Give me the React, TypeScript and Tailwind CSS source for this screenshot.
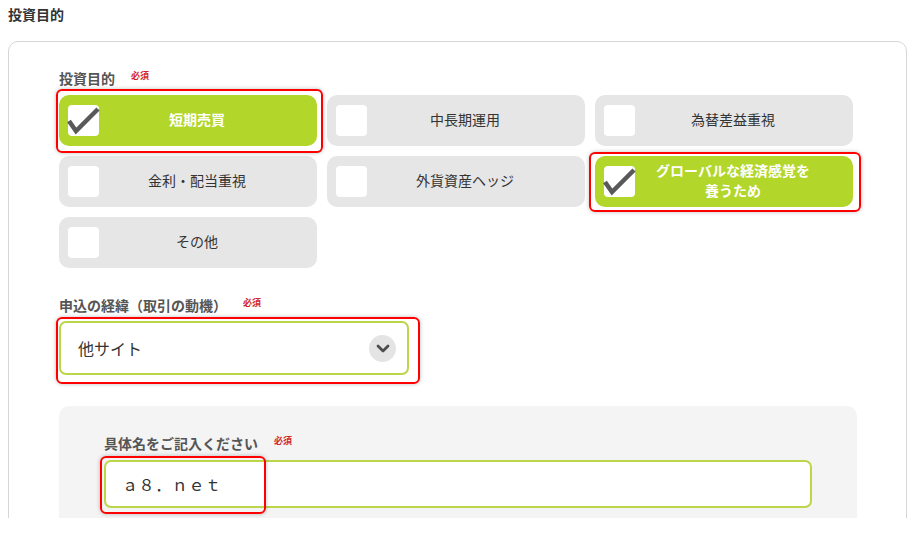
import React from "react";

const options: { label: string; checked: boolean }[] = [
  { label: "短期売買", checked: true },
  { label: "中長期運用", checked: false },
  { label: "為替差益重視", checked: false },
  { label: "金利・配当重視", checked: false },
  { label: "外貨資産ヘッジ", checked: false },
  { label: "グローバルな経済感覚を養うため", checked: true },
  { label: "その他", checked: false },
];

function Required() {
  return (
    <span className="ml-[16px] -translate-y-[3px] text-[9px] font-bold leading-none text-[#d0262a]">
      必須
    </span>
  );
}

function Option({ label, checked }: { label: string; checked: boolean }) {
  return (
    <div
      className={`flex h-[51px] items-center rounded-[10px] ${
        checked ? "bg-[#b2d629]" : "bg-[#e6e6e6]"
      }`}
    >
      <div className="ml-[9px] h-[31px] w-[31px] shrink-0 rounded-[4px] bg-white">
        {checked && (
          <svg width="31" height="31" viewBox="0 0 31 31" className="overflow-visible">
            <polyline
              points="1,16 8,26 30,4"
              fill="none"
              stroke="#595959"
              strokeWidth="4.5"
              strokeLinejoin="miter"
            />
          </svg>
        )}
      </div>
      <div
        className={`flex-1 -translate-y-[2px] pl-[15px] pr-[37px] text-center text-[14px] leading-[20px] ${
          checked ? "font-bold text-white" : "text-[#333]"
        }`}
      >
        {label}
      </div>
    </div>
  );
}

export default function App() {
  return (
    <div className="relative h-[535px] w-[913px] overflow-hidden bg-white font-['Noto_Sans_CJK_JP','Noto_Sans',sans-serif]">
      <div className="h-[518px] overflow-hidden">
        <div className="pl-[8px] pt-[4px] text-[14px] font-bold leading-[20px] text-[#333]">
          投資目的
        </div>
        <div className="ml-[8px] mt-[17px] h-[600px] w-[899px] rounded-[10px] border border-[#d6d6d6] pl-[50px] pt-[26px]">
          <div className="flex items-center text-[14px] font-bold leading-[20px] text-[#555]">
            投資目的
            <Required />
          </div>
          <div className="mt-[7px] grid w-[794px] grid-cols-3 gap-[10px]">
            {options.map((o) => (
              <Option key={o.label} label={o.label} checked={o.checked} />
            ))}
          </div>

          <div className="mt-[27px] flex items-center text-[14px] font-bold leading-[20px] text-[#555]">
            申込の経緯（取引の動機）
            <Required />
          </div>
          <div className="mt-[6px] flex h-[54px] w-[350px] items-center justify-between rounded-[7px] border-2 border-[#bcd64a] bg-white pl-[17px] pr-[11px]">
            <span className="text-[16px] text-[#333]">他サイト</span>
            <span className="flex h-[27px] w-[27px] items-center justify-center rounded-full bg-[#e4e4e4]">
              <svg width="14" height="9" viewBox="0 0 14 9">
                <polyline
                  points="2,2 7,7 12,2"
                  fill="none"
                  stroke="#4d4d4d"
                  strokeWidth="2.8"
                  strokeLinecap="round"
                  strokeLinejoin="round"
                />
              </svg>
            </span>
          </div>

          <div className="mt-[31px] h-[200px] w-[798px] rounded-[10px] bg-[#f4f4f4] pl-[45px] pt-[27px]">
            <div className="flex items-center text-[14px] font-bold leading-[20px] text-[#555]">
              具体名をご記入ください
              <Required />
            </div>
            <div className="mt-[7px] flex h-[48px] w-[708px] items-center rounded-[7px] border-2 border-[#bcd64a] bg-white pl-[16px]">
              <span className="text-[16px] tracking-[0.6px] text-[#333]">ａ８．ｎｅｔ</span>
            </div>
          </div>
        </div>
      </div>

      {/* red annotation overlays */}
      <div className="pointer-events-none absolute left-[56px] top-[89px] h-[64px] w-[267px] rounded-[6px] border-2 border-[#ff0000] shadow-[0_0_4px_rgba(0,0,0,0.25)]" />
      <div className="pointer-events-none absolute left-[589px] top-[152px] h-[60px] w-[272px] rounded-[6px] border-2 border-[#ff0000] shadow-[0_0_4px_rgba(0,0,0,0.25)]" />
      <div className="pointer-events-none absolute left-[56px] top-[317px] h-[67px] w-[364px] rounded-[6px] border-2 border-[#ff0000] shadow-[0_0_4px_rgba(0,0,0,0.25)]" />
      <div className="pointer-events-none absolute left-[100px] top-[456px] h-[58px] w-[166px] rounded-[6px] border-2 border-[#ff0000] shadow-[0_0_4px_rgba(0,0,0,0.25)]" />
    </div>
  );
}
